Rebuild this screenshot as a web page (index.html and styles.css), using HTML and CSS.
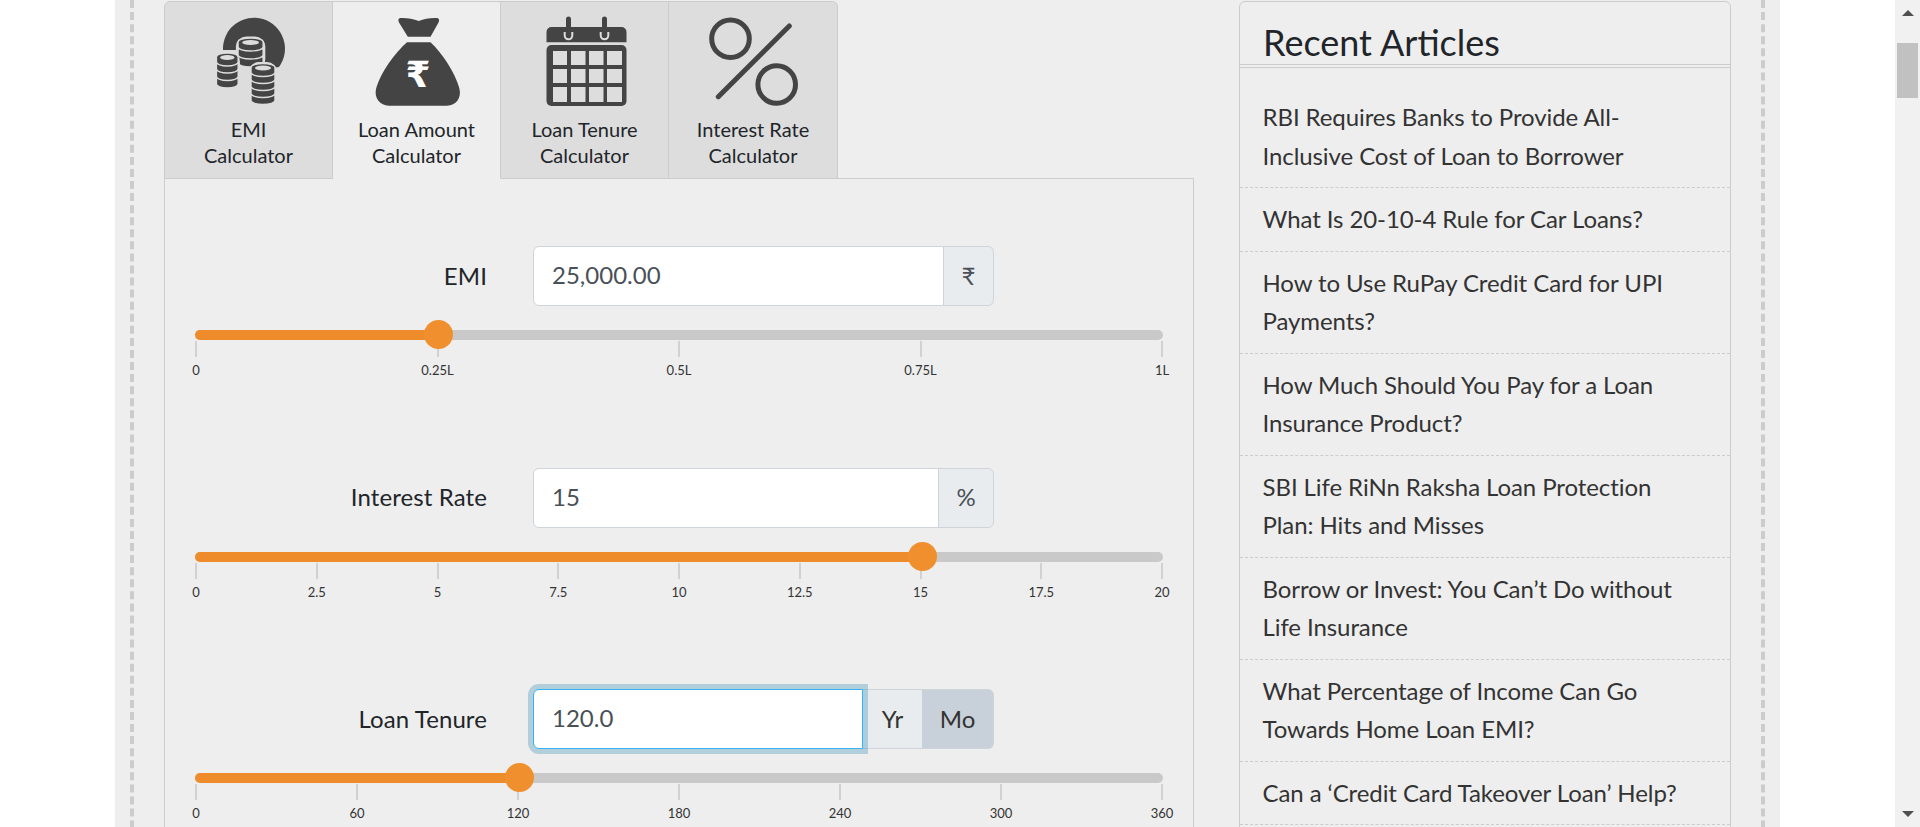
FILE: index.html
```html
<!DOCTYPE html>
<html lang="en">
<head>
<meta charset="UTF-8">
<meta name="viewport" content="width=device-width, initial-scale=1.0">
<title>Loan Amount Calculator</title>
<link rel="stylesheet" href="styles.css">
</head>
<body>
<div class="viewport">
    <div class="wrapper">
        <div class="inner">
            <main class="calc">
                <div class="tabs">
                    <a class="tab tab-first">
                        <svg class="tab-icon" viewBox="0 0 90 90">
                            <defs>
                                <g id="disc">
                                    <path d="M0 4a12 4 0 0 1 24 0v5a12 4 0 0 1-24 0z"/>
                                </g>
                            </defs>
                            <path class="ink" d="M19 33A31 31 0 1 1 75 50L60 52 36 33z"/>
                            <g class="stack" transform="translate(34 21) scale(1.05 1)">
                                <rect class="halo" x="-2" y="-1.500" width="28" height="33" rx="10"/>
                                <use href="#disc" y="16"/><use href="#disc" y="8"/><use href="#disc"/>
                                <ellipse class="hole" cx="12" cy="4.500" rx="8" ry="2.400"/>
                            </g>
                            <g class="stack" transform="translate(12.500 36) scale(.9 1)">
                                <rect class="halo" x="-2" y="-1.500" width="28" height="39" rx="10"/>
                                <use href="#disc" y="22"/><use href="#disc" y="14.500"/><use href="#disc" y="7"/><use href="#disc"/>
                                <ellipse class="hole" cx="12" cy="4.500" rx="8" ry="2.400"/>
                            </g>
                            <g class="stack" transform="translate(47 46.500)">
                                <rect class="halo" x="-2" y="-1.500" width="28" height="45" rx="10"/>
                                <use href="#disc" y="28"/><use href="#disc" y="21"/><use href="#disc" y="14"/><use href="#disc" y="7"/><use href="#disc"/>
                                <ellipse class="hole" cx="12" cy="4.500" rx="8" ry="2.400"/>
                            </g>
                        </svg>
                        <span>EMI<br>Calculator</span>
                    </a>
                    <a class="tab tab-active">
                        <svg class="tab-icon" viewBox="0 0 90 90">
                            <path class="ink" d="M28 1C33 .5 41 1.500 46.800 4 52 1.500 60 .5 65 1 67.500 1.500 67.500 3.500 66.500 5.500L58.500 19.700H35.800L27 5.500C26 3.500 26 1.500 28 1z"/>
                            <path class="ink" d="M35 25.300H58.500C69 35 83 55 87.500 72 89.500 81 84 88.700 75 88.700H16.800C8 88.700 2 81 4 72 8.500 55 24 35 35 25.300z"/>
                            <text class="rupee" x="46" y="70">₹</text>
                        </svg>
                        <span>Loan Amount<br>Calculator</span>
                    </a>
                    <a class="tab">
                        <svg class="tab-icon" viewBox="0 0 90 90">
                            <path class="ink" d="M6.500 25.300V15a5 5 0 0 1 5-5H26V2a2.500 2.500 0 0 1 5 0v8h31V2a2.500 2.500 0 0 1 5 0v8h14.500a5 5 0 0 1 5 5v10.300z"/>
                            <path class="cut" d="M24.700 15v3.500a3.800 3.800 0 0 0 7.600 0V15M60.700 15v3.500a3.800 3.800 0 0 0 7.600 0V15"/>
                            <rect class="ink" x="6.500" y="28" width="80" height="61" rx="5"/>
                            <g class="cell">
                                <rect x="13" y="34" width="14" height="14"/><rect x="31" y="34" width="14.500" height="14"/><rect x="49" y="34" width="14.500" height="14"/><rect x="67" y="34" width="15" height="14"/>
                                <rect x="13" y="52" width="14" height="14"/><rect x="31" y="52" width="14.500" height="14"/><rect x="49" y="52" width="14.500" height="14"/><rect x="67" y="52" width="15" height="14"/>
                                <rect x="13" y="70" width="14" height="15"/><rect x="31" y="70" width="14.500" height="15"/><rect x="49" y="70" width="14.500" height="15"/><rect x="67" y="70" width="15" height="15"/>
                            </g>
                        </svg>
                        <span>Loan Tenure<br>Calculator</span>
                    </a>
                    <a class="tab">
                        <svg class="tab-icon" viewBox="0 0 90 90">
                            <g class="line">
                                <circle cx="22.500" cy="21.700" r="18.800"/>
                                <circle cx="68.700" cy="67.500" r="18.800"/>
                                <path d="M81.300 9 10.300 79.700"/>
                            </g>
                        </svg>
                        <span>Interest Rate<br>Calculator</span>
                    </a>
                </div>
                <div class="panel">
                    <section class="field">
                        <div class="field-row">
                            <label class="field-label">EMI</label>
                            <div class="input-group">
                                <div class="input">25,000.00</div>
                                <div class="addon addon-emi">₹</div>
                            </div>
                        </div>
                        <div class="slider">
                            <div class="fill" style="width: 25%"></div>
                            <div class="thumb" style="left: 25%"></div>
                        </div>
                        <div class="ticks">
                            <div class="tick"><i></i>0</div>
                            <div class="tick"><i></i>0.25L</div>
                            <div class="tick"><i></i>0.5L</div>
                            <div class="tick"><i></i>0.75L</div>
                            <div class="tick"><i></i>1L</div>
                        </div>
                    </section>
                    <section class="field">
                        <div class="field-row">
                            <label class="field-label">Interest Rate</label>
                            <div class="input-group">
                                <div class="input">15</div>
                                <div class="addon addon-rate">%</div>
                            </div>
                        </div>
                        <div class="slider">
                            <div class="fill" style="width: 75%"></div>
                            <div class="thumb" style="left: 75%"></div>
                        </div>
                        <div class="ticks">
                            <div class="tick"><i></i>0</div>
                            <div class="tick"><i></i>2.5</div>
                            <div class="tick"><i></i>5</div>
                            <div class="tick"><i></i>7.5</div>
                            <div class="tick"><i></i>10</div>
                            <div class="tick"><i></i>12.5</div>
                            <div class="tick"><i></i>15</div>
                            <div class="tick"><i></i>17.5</div>
                            <div class="tick"><i></i>20</div>
                        </div>
                    </section>
                    <section class="field">
                        <div class="field-row">
                            <label class="field-label">Loan Tenure</label>
                            <div class="input-group">
                                <div class="input input-focus">120.0</div>
                                <div class="addon addon-yr">Yr</div>
                                <div class="addon addon-mo">Mo</div>
                            </div>
                        </div>
                        <div class="slider">
                            <div class="fill" style="width: 33.33%"></div>
                            <div class="thumb" style="left: 33.33%"></div>
                        </div>
                        <div class="ticks">
                            <div class="tick"><i></i>0</div>
                            <div class="tick"><i></i>60</div>
                            <div class="tick"><i></i>120</div>
                            <div class="tick"><i></i>180</div>
                            <div class="tick"><i></i>240</div>
                            <div class="tick"><i></i>300</div>
                            <div class="tick"><i></i>360</div>
                        </div>
                    </section>
                </div>
            </main>
            <aside class="sidebar">
                <h3 class="sidebar-title">Recent Articles</h3>
                <ul class="articles">
                    <li>RBI Requires Banks to Provide All-Inclusive Cost of Loan to Borrower</li>
                    <li>What Is 20-10-4 Rule for Car Loans?</li>
                    <li>How to Use RuPay Credit Card for UPI Payments?</li>
                    <li>How Much Should You Pay for a Loan Insurance Product?</li>
                    <li>SBI Life RiNn Raksha Loan Protection Plan: Hits and Misses</li>
                    <li>Borrow or Invest: You Can’t Do without Life Insurance</li>
                    <li>What Percentage of Income Can Go Towards Home Loan EMI?</li>
                    <li>Can a ‘Credit Card Takeover Loan’ Help?</li>
                </ul>
            </aside>
        </div>
    </div>
</div>
<div class="scrollbar">
    <div class="arrow-up"></div>
    <div class="scroll-thumb"></div>
    <div class="arrow-down"></div>
</div>
</body>
</html>
```
FILE: styles.css
```css
html, body {
    height: 100%;
}
body {
    font-family: Lato, "Open Sans", sans-serif;
    margin: 0;
    padding: 0;
    background-color: #fff;
    color: #212529;
    display: flex;
    overflow: hidden;
}
.viewport {
    flex: 1;
    min-width: 0;
    overflow: hidden;
}
.wrapper {
    width: 1665px;
    margin: 0 auto;
    padding: 0 15px;
    box-sizing: border-box;
    background-color: #eee;
}
.inner {
    display: flex;
    gap: 45px;
    padding: 1px 30px 0;
    border-left: 4px dashed #ccc;
    border-right: 4px dashed #ccc;
}

/* tabs */
.calc {
    width: 1030px;
    flex: none;
}
.tabs {
    display: flex;
    position: relative;
    z-index: 1;
    margin-bottom: -1px;
}
.tab {
    width: 168px;
    height: 178px;
    box-sizing: border-box;
    padding-top: 15px;
    background-color: #ddd;
    border-top: 1px solid #ccc;
    border-right: 1px solid #ccc;
    border-bottom: 1px solid #ccc;
    text-align: center;
    font-size: 20px;
    line-height: 26px;
}
.tab span {
    display: block;
    margin-top: 9px;
}
.tab-first {
    width: 169px;
    border-left: 1px solid #ccc;
    border-top-left-radius: 6px;
}
.tab:last-child {
    width: 169px;
    border-top-right-radius: 6px;
}
.tab-active {
    background-color: #eee;
    border-bottom-color: #eee;
}
.tab-icon {
    display: block;
    width: 90px;
    height: 90px;
    margin: 0 auto;
    overflow: visible;
}
.ink {
    fill: #444;
}
.cut {
    fill: none;
    stroke: #ddd;
    stroke-width: 2;
}
.cell {
    fill: #ddd;
}
.line {
    fill: none;
    stroke: #444;
    stroke-width: 5;
    stroke-linecap: round;
}
.rupee {
    fill: #fff;
    font-family: "DejaVu Sans", sans-serif;
    font-weight: bold;
    font-size: 36px;
    text-anchor: middle;
}
.stack use {
    fill: #444;
    stroke: #ddd;
    stroke-width: 1.4;
}
.halo {
    fill: #ddd;
}
.hole {
    fill: #ddd;
}

/* form */
.panel {
    height: 700px;
    box-sizing: border-box;
    padding: 67px 30px 0;
    border: 1px solid #ccc;
}
.field {
    height: 221.5px;
}
.field-row {
    display: flex;
    align-items: center;
    gap: 46px;
}
.field-label {
    width: 292px;
    padding-bottom: 2px;
    text-align: right;
    font-size: 24px;
    letter-spacing: 0.1px;
}
.input-group {
    display: flex;
    width: 461px;
    height: 60px;
    font-size: 24px;
}
.input {
    flex: 1;
    box-sizing: border-box;
    padding: 0 18px;
    background-color: #fff;
    border: 1px solid #ced4da;
    border-radius: 6px 0 0 6px;
    color: #495057;
    line-height: 56px;
}
.input-focus {
    position: relative;
    border-color: #33b5f5;
    box-shadow: 0 0 0 5px rgba(0, 113, 165, 0.25);
}
.addon {
    display: flex;
    align-items: center;
    justify-content: center;
    box-sizing: border-box;
    margin-left: -1px;
    padding-bottom: 2px;
    background-color: #e9ecef;
    border: 1px solid #ced4da;
    color: #495057;
    font-size: 24px;
}
.addon:last-child {
    border-radius: 0 6px 6px 0;
}
.addon-emi {
    width: 51px;
}
.addon-rate {
    width: 56px;
}
.addon-yr {
    width: 60px;
    color: #333;
    border-right: none;
}
.addon-mo {
    width: 72px;
    margin-left: 0;
    background-color: #c8d0d9;
    border-left: none;
    color: #333;
}

/* sliders */
.slider {
    position: relative;
    height: 10px;
    margin-top: 24px;
    background-color: #c9c9c9;
    border-radius: 5px;
}
.fill {
    height: 100%;
    background-color: #ee8c2b;
    border-radius: 5px 0 0 5px;
}
.thumb {
    position: absolute;
    top: -10px;
    width: 29px;
    height: 29px;
    margin-left: -13px;
    background-color: #f08f2d;
    border-radius: 50%;
}
.ticks {
    display: flex;
    justify-content: space-between;
    margin: 1px 0 0;
}
.tick {
    display: flex;
    flex-direction: column;
    align-items: center;
    width: 2px;
    font-size: 13px;
    line-height: 16px;
    white-space: nowrap;
    color: #333;
}
.tick i {
    display: block;
    flex: none;
    width: 2px;
    height: 16px;
    margin-bottom: 5px;
    background-color: #d4d0d0;
}

/* sidebar */
.sidebar {
    width: 492px;
    flex: none;
    box-sizing: border-box;
    border: 1px solid #ccc;
    border-radius: 6px 6px 0 0;
    height: 900px;
}
.sidebar-title {
    margin: 0 0 2px;
    height: 63px;
    box-sizing: border-box;
    padding: 18px 23px 0 23px;
    border-bottom: 1px solid #ccc;
    font-size: 36px;
    font-weight: 400;
    line-height: 44px;
}
.articles {
    list-style: none;
    margin: 0;
    padding: 18px 0 0;
    border-top: 1px solid #ccc;
}
.articles li {
    padding: 12px 23px 12px 22.5px;
    border-bottom: 1px dashed #ccc;
    color: #333;
    font-size: 24px;
    line-height: 38.5px;
    letter-spacing: -0.08px;
}

/* page scrollbar */
.scrollbar {
    flex: none;
    display: flex;
    flex-direction: column;
    align-items: center;
    width: 25px;
    height: 100%;
    background-color: #f1f1f1;
}
.arrow-up {
    width: 0;
    height: 0;
    margin-top: 10px;
    border: 6px solid transparent;
    border-top: none;
    border-bottom-color: #505050;
}
.scroll-thumb {
    width: 21px;
    height: 55px;
    margin-top: 27px;
    background-color: #c1c1c1;
}
.arrow-down {
    width: 0;
    height: 0;
    margin-top: auto;
    margin-bottom: 10px;
    border: 6px solid transparent;
    border-bottom: none;
    border-top-color: #505050;
}
```
